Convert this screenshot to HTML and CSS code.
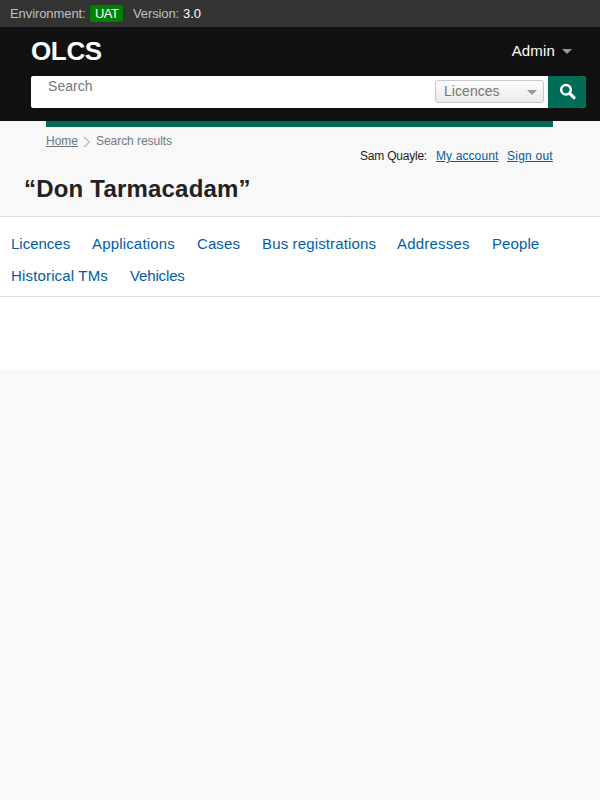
FILE: index.html
```html
<!DOCTYPE html>
<html lang="en">
<head>
<meta charset="utf-8">
<title>OLCS</title>
<link rel="stylesheet" href="styles.css">
</head>
<body>
<div class="environment">
  <span class="env-label">Environment:</span><span class="env-badge">UAT</span><span class="version-label">Version:</span><span class="version">3.0</span>
</div>
<header class="header">
  <div class="header-top">
    <a class="logo">OLCS</a>
    <a class="admin"><span class="admin-text">Admin</span><span class="arrow"></span></a>
  </div>
  <form class="search">
    <div class="search-field"><span class="placeholder">Search</span></div>
    <div class="select"><span class="select-text">Licences</span><span class="arrow"></span></div>
    <div class="search-button">
      <svg width="18" height="18" viewBox="0 0 18 18"><circle cx="7" cy="6.8" r="4.8" fill="none" stroke="#fff" stroke-width="2.5"/><path d="M10.6 10.4L15 14.7" stroke="#fff" stroke-width="3.2" stroke-linecap="round"/></svg>
    </div>
  </form>
</header>
<div class="bar"></div>
<div class="page-header">
  <div class="meta">
    <div class="crumbs"><a class="home">Home</a><svg class="chevron" width="8" height="12" viewBox="0 0 8 12"><path d="M1 .8L6.2 6L1 11.2" fill="none" stroke="#b9bdbf" stroke-width="1.4"/></svg><span class="current">Search results</span></div>
    <div class="account"><span class="user">Sam Quayle:</span><a class="my-account">My account</a><a class="sign-out">Sign out</a></div>
  </div>
  <h1 class="title">“Don Tarmacadam”</h1>
</div>
<nav class="tabs">
  <a class="tab-licences">Licences</a><a class="tab-applications">Applications</a><a class="tab-cases">Cases</a><a class="tab-bus">Bus registrations</a><a class="tab-addresses">Addresses</a><a class="tab-people">People</a><a class="tab-tms">Historical TMs</a><a class="tab-vehicles">Vehicles</a>
</nav>
<main class="content"></main>
</body>
</html>
```
FILE: styles.css
```css
* { box-sizing: border-box; }
body {
  margin: 0;
  min-height: 800px;
  background: #f8f8f8;
  color: #222;
  font-family: "Liberation Sans", Arial, sans-serif;
  white-space: nowrap;
}
.environment {
  display: flex;
  align-items: center;
  height: 27px;
  padding-left: 10px;
  background: #333;
  color: #bfc1c3;
  font-size: 13px;
  line-height: 17px;
}
.env-label { width: 76px; letter-spacing: -.08px; }
.env-badge {
  width: 33px;
  margin: 0 10px 0 4px;
  padding-left: 5px;
  border-radius: 2px;
  background: #008000;
  color: #fff;
  letter-spacing: -.6px;
}
.version-label { width: 46px; letter-spacing: -.12px; }
.version { margin-left: 4px; color: #fff; }
.header {
  height: 94px;
  padding: 0 14px 0 31px;
  background: #111;
  color: #fff;
}
.header-top {
  display: flex;
  justify-content: space-between;
  align-items: center;
  height: 49px;
  padding: 0 14px 2px 0;
}
.logo {
  font-size: 26px;
  font-weight: bold;
  line-height: 30px;
  letter-spacing: -.35px;
}
.admin { display: flex; align-items: center; font-size: 15px; letter-spacing: .15px; }
.arrow {
  border: 5px solid transparent;
  border-top: 5px solid #999;
  border-bottom: 0;
}
.admin .arrow { margin: 2px 0 0 7px; }
.search {
  display: flex;
  align-items: center;
  height: 32px;
  margin: 0;
  border-radius: 2px 4px 4px 2px;
  background: #fff;
}
.search-field {
  flex: 1;
  height: 32px;
  padding: 2px 0 0 17px;
  color: #767676;
  font-size: 14px;
  line-height: 17px;
  letter-spacing: .06px;
}
.select {
  display: flex;
  align-items: center;
  justify-content: space-between;
  width: 109px;
  height: 23px;
  margin: 0 4px 2px 0;
  padding: 0 6px 0 8px;
  border: 1px solid #c8c8c8;
  border-radius: 3px;
  background: linear-gradient(#fcfcfc, #ebebeb);
  color: #767676;
  font-size: 14px;
  letter-spacing: .05px;
}
.select .arrow { margin-top: 2px; }
.search-button {
  width: 38px;
  height: 32px;
  padding: 7px 0 0 11px;
  border-radius: 0 4px 4px 0;
  background: #006e56;
}
.bar { height: 6px; margin: 0 47px 0 46px; background: #006e56; }
.page-header { height: 90px; border-bottom: 1px solid #dcdcdc; }
.meta {
  display: flex;
  justify-content: space-between;
  height: 44px;
  margin: 0 47px 0 46px;
  font-size: 12px;
  line-height: 14px;
}
.crumbs { display: flex; padding-top: 7px; color: #6f777b; }
.home { text-decoration: underline; }
.current { letter-spacing: -.05px; }
.chevron { margin: 2px 5px 0; }
.account { display: flex; padding-top: 22px; }
.account a { color: #005ea5; text-decoration: underline; }
.user { width: 76px; letter-spacing: -.22px; }
.my-account { width: 71px; letter-spacing: .1px; }
.sign-out { width: 46px; letter-spacing: .23px; }
.title {
  margin: 4px 0 0 24px;
  font-size: 24px;
  line-height: 28px;
  letter-spacing: .2px;
}
.tabs {
  display: flex;
  flex-wrap: wrap;
  align-content: flex-start;
  column-gap: 22px;
  height: 80px;
  padding: 11px 11px 0;
  border-bottom: 1px solid #dcdcdc;
  background: #fff;
  color: #005ea5;
  font-size: 15px;
  line-height: 32px;
}
.tab-licences { width: 59px; }
.tab-applications { width: 83px; letter-spacing: .17px; }
.tab-cases { width: 43px; letter-spacing: .1px; }
.tab-bus { width: 113px; letter-spacing: .14px; }
.tab-addresses { width: 73px; letter-spacing: .2px; }
.tab-people { width: 47px; letter-spacing: .1px; }
.tab-tms { width: 97px; letter-spacing: .16px; }
.tab-vehicles { letter-spacing: -.15px; }
.content { height: 73px; background: #fff; }
```
